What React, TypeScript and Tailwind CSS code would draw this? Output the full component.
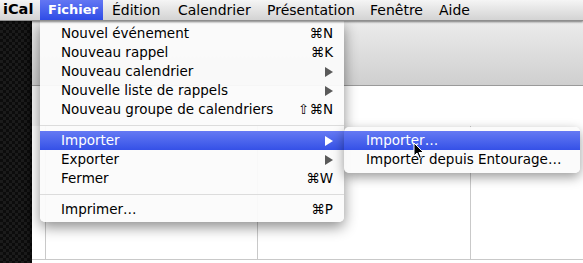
import React from "react";

const font = { fontFamily: '"DejaVu Sans", "Liberation Sans", sans-serif' };

function Arrow({ white }: { white?: boolean }) {
  return (
    <svg width="8" height="10" viewBox="0 0 8 10" className="block">
      <path d="M0 0 L8 5 L0 10 Z" fill={white ? "#ffffff" : "#5a5a5a"} />
    </svg>
  );
}

type Item = { label: string; right?: string; sub?: boolean; active?: boolean } | "sep";

const items: Item[] = [
  { label: "Nouvel événement", right: "⌘N" },
  { label: "Nouveau rappel", right: "⌘K" },
  { label: "Nouveau calendrier", sub: true },
  { label: "Nouvelle liste de rappels", sub: true },
  { label: "Nouveau groupe de calendriers", right: "⇧⌘N" },
  "sep",
  { label: "Importer", sub: true, active: true },
  { label: "Exporter", sub: true },
  { label: "Fermer", right: "⌘W" },
  "sep",
  { label: "Imprimer…", right: "⌘P" },
];

export default function App() {
  return (
    <div
      className="relative w-[583px] h-[263px] overflow-hidden text-[13.5px] text-black select-none"
      style={font}
    >
      {/* menu bar */}
      <div className="relative z-20 h-[21px] flex items-stretch text-[14px] bg-gradient-to-b from-[#f5f5f5] to-[#d3d3d3] border-b border-[#8e8e8e] shadow-[0_1px_2px_rgba(0,0,0,0.5)]">
        <div className="w-[40px] pl-[3px] flex items-center font-bold text-[14.5px]">iCal</div>
        <div className="w-[63px] pl-[8px] flex items-center font-bold text-[13px] text-white bg-gradient-to-b from-[#6376f3] to-[#2f4be6]">
          Fichier
        </div>
        <div className="w-[66px] pl-[9px] flex items-center">Édition</div>
        <div className="w-[89px] pl-[9px] flex items-center">Calendrier</div>
        <div className="w-[103px] pl-[9px] flex items-center">Présentation</div>
        <div className="w-[69px] pl-[9px] flex items-center">Fenêtre</div>
        <div className="pl-[9px] flex items-center">Aide</div>
      </div>

      {/* desktop + window */}
      <div className="flex h-[242px]">
        <div className="w-[32px] shrink-0 bg-[repeating-conic-gradient(#1b1b1b_0_25%,#0c0c0c_0_50%)] bg-[length:6px_6px]" />
        <div className="flex-1 flex flex-col bg-white shadow-[-2px_0_4px_rgba(0,0,0,0.6)]">
          <div className="h-[65px] shrink-0 bg-gradient-to-b from-[#ececec] to-[#cfcfcf] border-b border-[#9a9a9a]" />
          <div className="h-[40px] shrink-0 flex">
            <div className="w-[13px] bg-[#f4f4f4]" />
            <div className="flex-1" />
          </div>
          <div className="flex h-[134px] border-b border-[#c9c9c9]">
            <div className="w-[13px] shrink-0" />
            <div className="w-[212px] shrink-0 border-l border-[#c9c9c9]" />
            <div className="w-[213px] shrink-0 border-l border-[#c9c9c9]" />
            <div className="flex-1 border-l border-[#c9c9c9]" />
          </div>
        </div>
      </div>

      {/* Fichier menu */}
      <div className="absolute z-10 left-[40px] top-[21px] w-[304px] pt-[3px] pb-[3px] bg-[#fbfbfb]/95 rounded-b-[5px] shadow-[0_5px_14px_rgba(0,0,0,0.45)]">
        {items.map((it, i) =>
          it === "sep" ? (
            <div key={i} className="h-[12px] flex items-center">
              <div className="h-px w-full bg-[#dcdcdc]" />
            </div>
          ) : (
            <div
              key={i}
              className={`h-[19px] flex items-center pl-[21px] pr-[11px] ${
                it.active ? "bg-gradient-to-b from-[#6579f3] to-[#3550e7] text-white" : ""
              }`}
            >
              <span className="flex-1 whitespace-nowrap">{it.label}</span>
              {it.right && <span className="whitespace-nowrap">{it.right}</span>}
              {it.sub && <Arrow white={it.active} />}
            </div>
          )
        )}
      </div>

      {/* submenu */}
      <div className="absolute z-10 left-[344px] top-[127px] w-[236px] py-[4px] bg-[#fbfbfb]/95 rounded-[5px] shadow-[0_4px_12px_rgba(0,0,0,0.4)]">
        <div className="h-[19px] flex items-center pl-[22px] text-white bg-gradient-to-b from-[#6579f3] to-[#3550e7]">
          Importer…
        </div>
        <div className="h-[19px] flex items-center pl-[22px] whitespace-nowrap">
          Importer depuis Entourage…
        </div>
      </div>

      {/* cursor */}
      <svg
        className="absolute z-30 left-[413px] top-[142px]"
        width="12"
        height="18"
        viewBox="0 0 12 18"
      >
        <path
          d="M1 1 L1 14 L4 11 L6.5 16.5 L8.5 15.5 L6 10.5 L10.5 10.5 Z"
          fill="#000"
          stroke="#fff"
          strokeWidth="1"
          strokeLinejoin="round"
        />
      </svg>
    </div>
  );
}
